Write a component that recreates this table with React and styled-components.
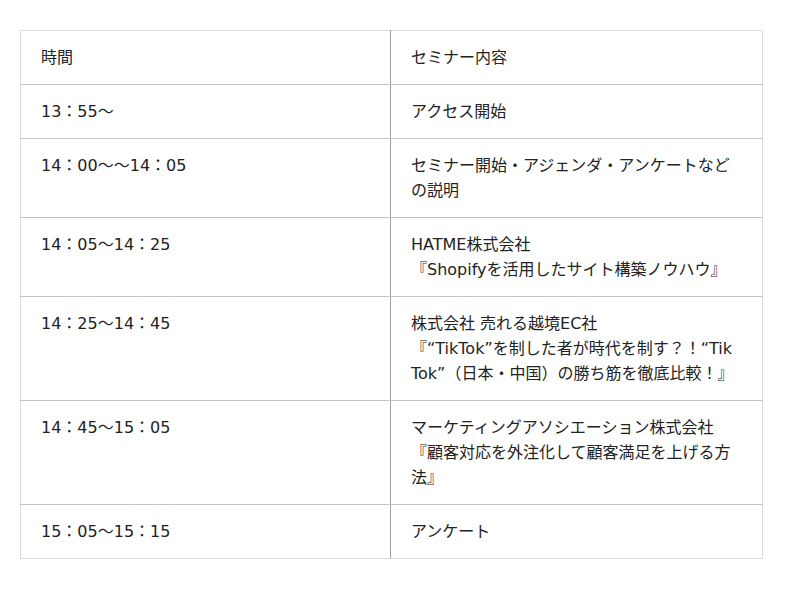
import React from "react";
import styled, { createGlobalStyle } from "styled-components";

const Global = createGlobalStyle`
  html, body { margin: 0; padding: 0; background: #fff; }
  body { font-family: "DejaVu Sans", "Noto Sans CJK JP", sans-serif; color: #222; }
`;

const Page = styled.div`
  padding: 30px 38px 30px 20px;
`;

const Table = styled.table`
  width: 742px;
  border-collapse: collapse;
  table-layout: fixed;
  border: 1px solid #dcdcdc;
`;

const Col = styled.col`
  width: ${(p) => p.$w};
`;

const Cell = styled.td`
  padding: 14px ${(p) => (p.$right ? "23px" : "20px")} 14px 20px;
  font-size: 16px;
  line-height: 25px;
  vertical-align: top;
  border-top: 1px solid #c4c4c4;
  border-bottom: 1px solid #c4c4c4;
  border-left: 1px solid ${(p) => (p.$right ? "#a0a0a0" : "#dcdcdc")};
  border-right: 1px solid ${(p) => (p.$right ? "#dcdcdc" : "#a0a0a0")};
  tr:first-child > & { border-top-color: #dcdcdc; }
  tr:last-child > & { border-bottom-color: #dcdcdc; }
  word-break: break-all;
`;

const rows = [
  ["時間", ["セミナー内容"]],
  ["13：55〜", ["アクセス開始"]],
  ["14：00〜〜14：05", ["セミナー開始・アジェンダ・アンケートなどの説明"]],
  ["14：05〜14：25", ["HATME株式会社", "『Shopifyを活用したサイト構築ノウハウ』"]],
  ["14：25〜14：45", ["株式会社 売れる越境EC社", "『“TikTok”を制した者が時代を制す？！“TikTok”（日本・中国）の勝ち筋を徹底比較！』"]],
  ["14：45〜15：05", ["マーケティングアソシエーション株式会社", "『顧客対応を外注化して顧客満足を上げる方法』"]],
  ["15：05〜15：15", ["アンケート"]],
];

export default function App() {
  return (
    <Page>
      <Global />
      <Table>
        <colgroup>
          <Col $w="370px" />
          <Col $w="372px" />
        </colgroup>
        <tbody>
          {rows.map(([time, lines], i) => (
            <tr key={i}>
              <Cell>{time}</Cell>
              <Cell $right>
                {lines.map((l, j) => (
                  <React.Fragment key={j}>
                    {j > 0 && <br />}
                    {l}
                  </React.Fragment>
                ))}
              </Cell>
            </tr>
          ))}
        </tbody>
      </Table>
    </Page>
  );
}
